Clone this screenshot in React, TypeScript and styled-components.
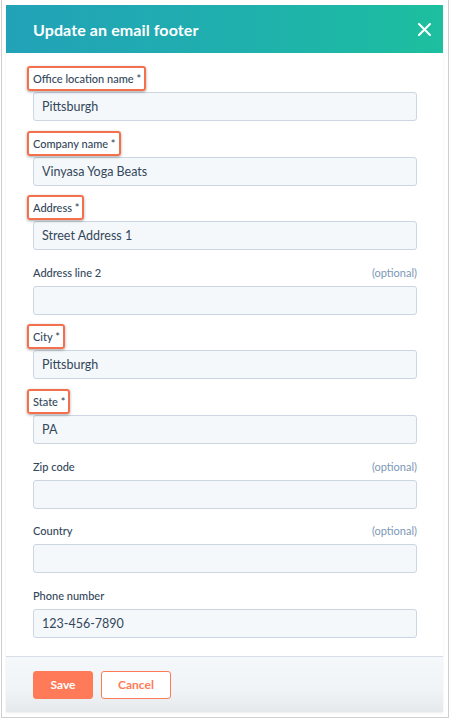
import * as React from 'react';
import styled, { createGlobalStyle } from 'styled-components';

const GlobalStyle = createGlobalStyle`
  html, body {
    margin: 0;
    padding: 0;
    background: #ffffff;
  }
  body {
    font-family: Lato, "Open Sans", "Liberation Sans", sans-serif;
    color: #33475b;
  }
  * {
    box-sizing: border-box;
  }
`;

const Frame = styled.div`
  margin-left: 1px;
  width: 448px;
  height: 718px;
  border: 1px solid #cfcfcf;
  border-top: none;
  padding: 5px 4px 5px 4px;
  background: #ffffff;
`;

const Panel = styled.div`
  display: flex;
  flex-direction: column;
  width: 437px;
  height: 707px;
  background: #ffffff;
  box-shadow: 0 1px 2px rgba(0, 0, 0, 0.08);
`;

const Header = styled.div`
  display: flex;
  align-items: center;
  justify-content: space-between;
  height: 48px;
  padding: 0 9px 0 27px;
  background: linear-gradient(90deg, #22a2b8 0%, #1fb0ad 55%, #1dbf9f 100%);
`;

const Title = styled.h1`
  margin: 0;
  font-size: 16px;
  font-weight: 700;
  color: #ffffff;
  letter-spacing: 0.1px;
`;

const CloseButton = styled.button`
  display: flex;
  align-items: center;
  justify-content: center;
  width: 20px;
  height: 20px;
  padding: 0;
  border: none;
  background: transparent;
  cursor: pointer;
`;

const Body = styled.div`
  flex: 1;
  display: flex;
  flex-direction: column;
  gap: 15.6px;
  padding: 19px 26px 0 27px;
`;

const Field = styled.div`
  display: flex;
  flex-direction: column;
`;

const LabelRow = styled.div`
  display: flex;
  align-items: center;
  justify-content: space-between;
  height: 14px;
  margin-bottom: 6px;
`;

const Label = styled.label<{ highlighted?: boolean }>`
  position: relative;
  font-size: 11px;
  font-weight: 500;
  color: #33475b;
  line-height: 14px;

  &::before {
    content: '';
    display: ${(props) => (props.highlighted ? 'block' : 'none')};
    position: absolute;
    left: -6px;
    right: -5px;
    top: -6px;
    bottom: -5px;
    border: 2px solid #f2714c;
    border-radius: 3px;
    box-shadow: 0 1px 3px rgba(0, 0, 0, 0.35);
  }
`;

const Optional = styled.span`
  font-size: 11px;
  color: #7c98b6;
  line-height: 14px;
`;

const Input = styled.input`
  width: 100%;
  height: 29px;
  padding: 0 8px;
  border: 1px solid #cbd6e2;
  border-radius: 3px;
  background: #f5f8fa;
  font-family: inherit;
  font-size: 12.5px;
  color: #33475b;
  outline: none;
`;

const Footer = styled.div`
  display: flex;
  align-items: center;
  gap: 8px;
  height: 56px;
  margin-top: 18px;
  padding: 0 27px;
  border-top: 1px solid #d6dfe8;
  background: linear-gradient(180deg, #f5f8fa 0%, #f1f4f6 60%, #e6e9ec 100%);
`;

const Button = styled.button<{ primary?: boolean }>`
  height: 28px;
  padding: 0;
  border: 1px solid #ff7a59;
  border-radius: 3px;
  font-family: inherit;
  font-size: 12px;
  font-weight: 700;
  cursor: pointer;
  width: ${(props) => (props.primary ? '60px' : '70px')};
  background: ${(props) => (props.primary ? '#ff7a59' : '#ffffff')};
  color: ${(props) => (props.primary ? '#ffffff' : '#ff7a59')};
`;

type FieldDef = {
  label: string;
  value: string;
  required?: boolean;
  optional?: boolean;
};

const fields: FieldDef[] = [
  { label: 'Office location name', value: 'Pittsburgh', required: true },
  { label: 'Company name', value: 'Vinyasa Yoga Beats', required: true },
  { label: 'Address', value: 'Street Address 1', required: true },
  { label: 'Address line 2', value: '', optional: true },
  { label: 'City', value: 'Pittsburgh', required: true },
  { label: 'State', value: 'PA', required: true },
  { label: 'Zip code', value: '', optional: true },
  { label: 'Country', value: '', optional: true },
  { label: 'Phone number', value: '123-456-7890' },
];

const CloseIcon = () => (
  <svg width="13" height="13" viewBox="0 0 13 13">
    <path d="M1 1 L12 12 M12 1 L1 12" stroke="#ffffff" strokeWidth="2" strokeLinecap="round" />
  </svg>
);

export default function App() {
  return (
    <>
      <GlobalStyle />
      <Frame>
        <Panel>
          <Header>
            <Title>Update an email footer</Title>
            <CloseButton type="button" aria-label="Close">
              <CloseIcon />
            </CloseButton>
          </Header>
          <Body>
            {fields.map((f) => (
              <Field key={f.label}>
                <LabelRow>
                  <Label highlighted={f.required}>
                    {f.label}
                    {f.required ? ' *' : ''}
                  </Label>
                  {f.optional && <Optional>(optional)</Optional>}
                </LabelRow>
                <Input defaultValue={f.value} />
              </Field>
            ))}
          </Body>
          <Footer>
            <Button primary type="button">Save</Button>
            <Button type="button">Cancel</Button>
          </Footer>
        </Panel>
      </Frame>
    </>
  );
}
